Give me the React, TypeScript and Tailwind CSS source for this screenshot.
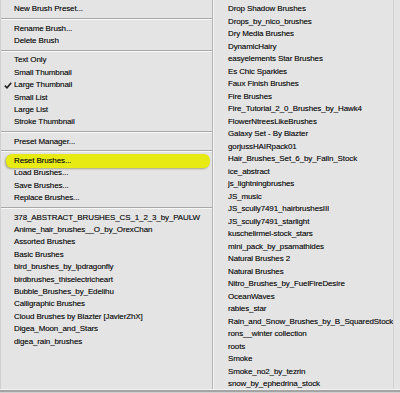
const leftGroups: string[][] = [
  ["New Brush Preset..."],
  ["Rename Brush...", "Delete Brush"],
  ["Text Only", "Small Thumbnail", "Large Thumbnail", "Small List", "Large List", "Stroke Thumbnail"],
  ["Preset Manager..."],
  ["Reset Brushes...", "Load Brushes...", "Save Brushes...", "Replace Brushes..."],
  [
    "378_ABSTRACT_BRUSHES_CS_1_2_3_by_PAULW",
    "Anime_hair_brushes__O_by_OrexChan",
    "Assorted Brushes",
    "Basic Brushes",
    "bird_brushes_by_lpdragonfly",
    "birdbrushes_thiselectricheart",
    "Bubble_Brushes_by_Edelihu",
    "Calligraphic Brushes",
    "Cloud Brushes by Blazter [JavierZhX]",
    "Digea_Moon_and_Stars",
    "digea_rain_brushes",
  ],
];

const rightItems = [
  "Drop Shadow Brushes",
  "Drops_by_nico_brushes",
  "Dry Media Brushes",
  "DynamicHairy",
  "easyelements Star Brushes",
  "Es Chic Sparkles",
  "Faux Finish Brushes",
  "Fire Brushes",
  "Fire_Tutorial_2_0_Brushes_by_Hawk4",
  "FlowerNtreesLikeBrushes",
  "Galaxy Set - By Blazter",
  "gorjussHAIRpack01",
  "Hair_Brushes_Set_6_by_Falln_Stock",
  "ice_abstract",
  "js_lightningbrushes",
  "JS_music",
  "JS_scully7491_hairbrushesIII",
  "JS_scully7491_starlight",
  "kuschelirmel-stock_stars",
  "mini_pack_by_psamathides",
  "Natural Brushes 2",
  "Natural Brushes",
  "Nitro_Brushes_by_FuelFireDesire",
  "OceanWaves",
  "rabies_star",
  "Rain_and_Snow_Brushes_by_B_SquaredStock",
  "rons__winter collection",
  "roots",
  "Smoke",
  "Smoke_no2_by_tezrin",
  "snow_by_ephedrina_stock",
];

const Separator = () => (
  <div className="h-[7px] flex flex-col justify-center">
    <div className="h-px bg-[#a8a8a8]" />
    <div className="h-px bg-[#f8f8f8]" />
  </div>
);

const Item = ({ label }: { label: string }) => {
  const checked = label === "Large Thumbnail";
  const active = label === "Reset Brushes...";
  return (
    <div className="relative h-[12.4px] flex items-center pl-[13px] whitespace-nowrap">
      {active && (
        <div className="absolute left-[5px] right-[2px] top-[-1px] bottom-[-1px] rounded-[6px] bg-[#e8ea14] shadow-[-1px_1px_2px_rgba(90,90,0,0.45)]" />
      )}
      {checked && (
        <svg className="absolute left-[3px] top-[3px]" width="8" height="7" viewBox="0 0 8 7">
          <path d="M0.8 3.6 L3 5.8 L7.2 0.8" fill="none" stroke="#222" strokeWidth="1.6" />
        </svg>
      )}
      <span className="relative">{label}</span>
    </div>
  );
};

export default function App() {
  return (
    <div
      className="w-[400px] h-[393px] bg-[#e4e4e4] text-[#161616] text-[8px] tracking-[-0.12px] leading-none overflow-hidden flex flex-col [text-shadow:0_0_0.5px_rgba(0,0,0,0.5)]"
      style={{ fontFamily: '"Liberation Sans", Arial, sans-serif' }}
    >
      <div className="flex flex-1 min-h-0">
        <div className="w-[212px] shrink-0 pt-[3px] border-l border-[#d0d0d0]">
          {leftGroups.map((group, i) => (
            <div key={i}>
              {i > 0 && <Separator />}
              {group.map((label) => (
                <Item key={label} label={label} />
              ))}
            </div>
          ))}
        </div>
        <div className="w-px shrink-0 bg-[#b4b4b4]" />
        <div className="w-px shrink-0 bg-[#f6f6f6]" />
        <div className="flex-1 min-w-0 pt-[3px] pl-[14px]">
          {rightItems.map((label) => (
            <div key={label} className="h-[12.5px] flex items-center whitespace-nowrap">
              {label}
            </div>
          ))}
        </div>
        <div className="w-px shrink-0 bg-[#d2d2d2] mr-[6px]" />
      </div>
      <div className="h-px bg-[#f2f2f2]" />
      <div className="h-[2px] bg-[#a4a4a4]" />
      <div className="h-px bg-[#cfcfcf]" />
    </div>
  );
}
